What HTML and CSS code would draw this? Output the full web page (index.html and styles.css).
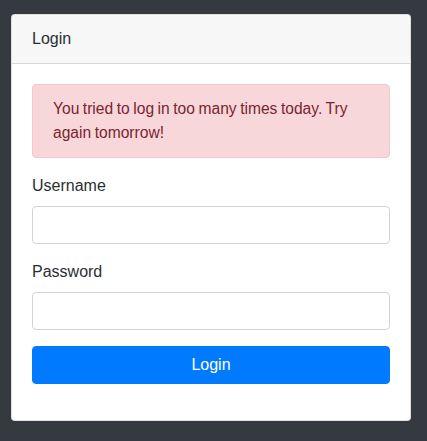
FILE: index.html
```html
<!DOCTYPE html>
<html>
<head>
<meta charset="utf-8">
<link rel="stylesheet" href="styles.css">
</head>
<body>
<div class="card">
  <div class="card-header">Login</div>
  <div class="card-body">
    <div class="alert">You tried to log in too many times today. Try again tomorrow!</div>
    <form>
      <div class="form-group">
        <label class="label" for="u">Username</label>
        <input class="input" id="u" type="text">
      </div>
      <div class="form-group">
        <label class="label" for="p">Password</label>
        <input class="input" id="p" type="password">
      </div>
      <div class="form-group">
        <button class="btn" type="button">Login</button>
      </div>
    </form>
  </div>
</div>
</body>
</html>
```
FILE: styles.css
```css
html, body {
  margin: 0;
  background: #343a40;
  height: 100%;
}
body {
  padding: 14px 0 0 11px;
  box-sizing: border-box;
  font-family: "Liberation Sans", Arial, sans-serif;
  font-size: 16px;
  line-height: 1.5;
  color: #2a2e33;
}
.card {
  width: 400px;
  box-sizing: border-box;
  background: #fff;
  border: 1px solid rgba(0,0,0,.125);
  border-radius: 4px;
}
.card-header {
  padding: 12px 20px;
  background: #f7f7f7;
  border-bottom: 1px solid rgba(0,0,0,.125);
  border-radius: 3px 3px 0 0;
}
.card-body {
  padding: 20px;
}
.alert {
  padding: 12px 20px;
  margin-bottom: 16px;
  color: #7a2530;
  background: #f8d7da;
  border: 1px solid #f5c6cb;
  border-radius: 4px;
  font-size: 15.6px;
  line-height: 24px;
  word-spacing: -0.8px;
}
form { margin: 0; }
.form-group {
  margin-bottom: 16px;
}
.label {
  display: block;
  margin-bottom: 8px;
}
.input {
  display: block;
  width: 100%;
  height: 38px;
  box-sizing: border-box;
  padding: 6px 12px;
  font: inherit;
  border: 1px solid #ced4da;
  border-radius: 4px;
  background: #fff;
}
.btn {
  display: block;
  width: 100%;
  height: 38px;
  box-sizing: border-box;
  padding: 6px 12px;
  font: inherit;
  color: #fff;
  background: #007bff;
  border: 1px solid #007bff;
  border-radius: 4px;
}
```
